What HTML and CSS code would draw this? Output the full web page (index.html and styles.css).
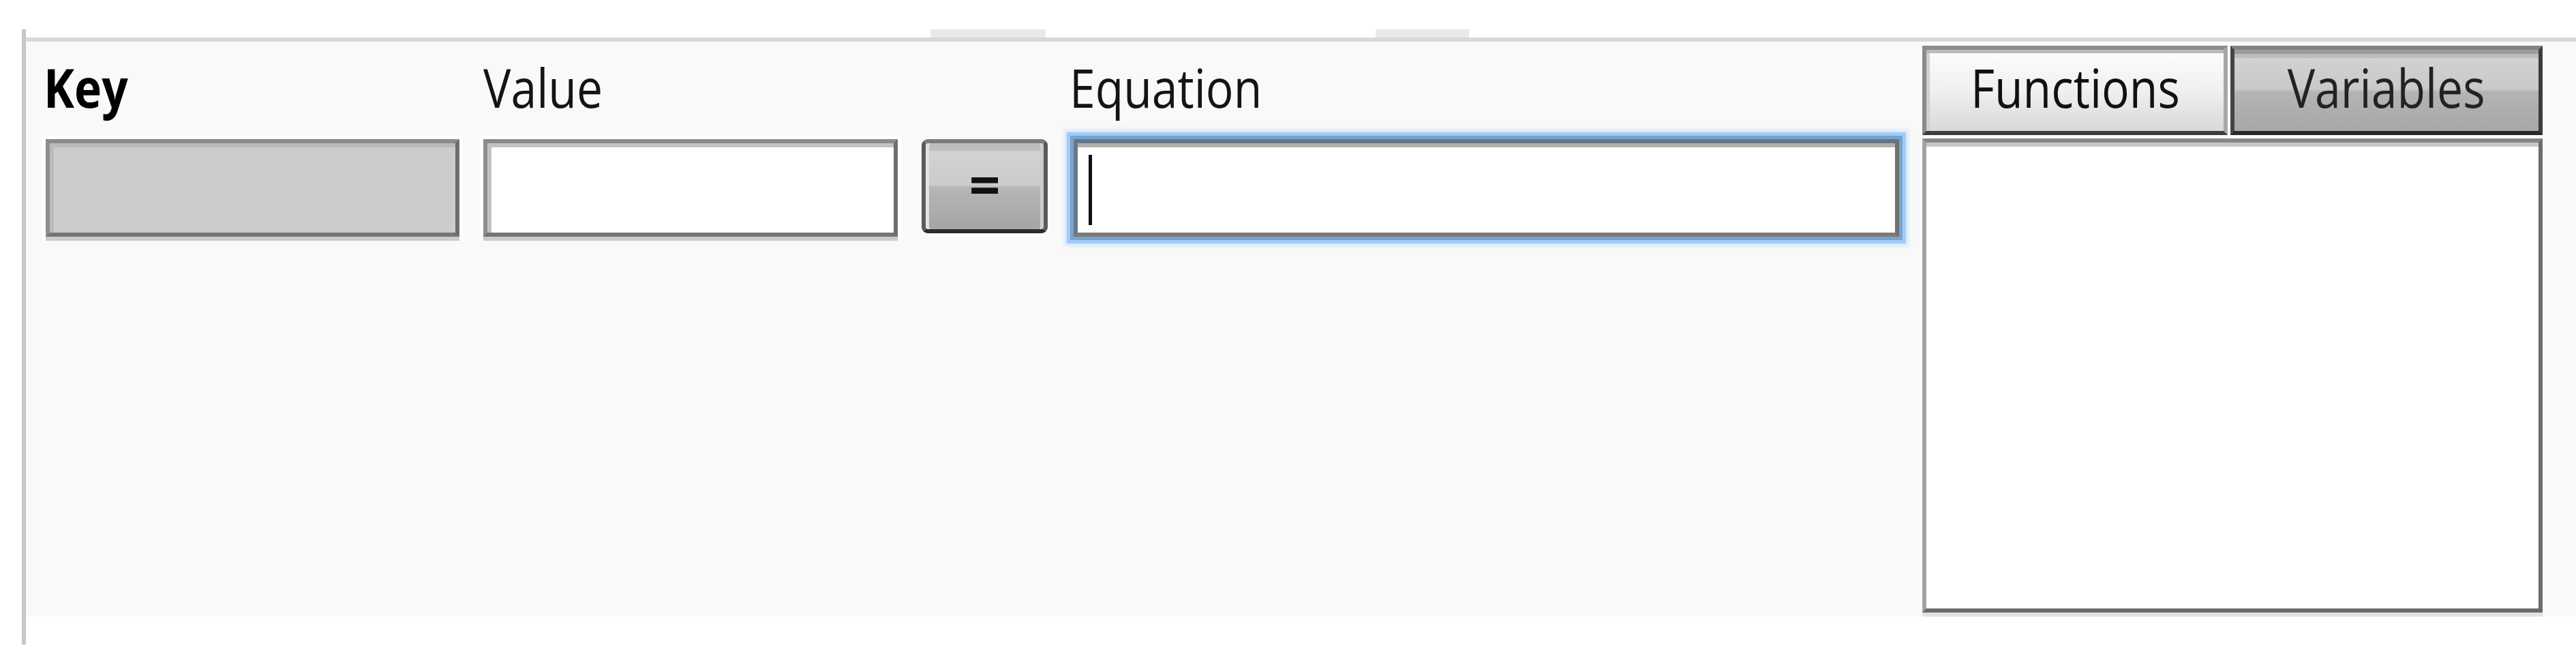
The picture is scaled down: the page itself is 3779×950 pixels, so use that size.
FILE: index.html
```html
<!DOCTYPE html>
<html>
<head>
<meta charset="utf-8">
<title>Equation editor</title>
<link rel="stylesheet" href="styles.css">
</head>
<body>
<div class="window">
  <div class="tabstrip"><span class="ghost-tab ghost-1"></span><span class="ghost-tab ghost-2"></span></div>
  <div class="rule"></div>
  <div class="panel">
    <div class="form">
      <div class="label key-label"><span class="txt">Key</span></div>
      <div class="label"><span class="txt">Value</span></div>
      <div class="label"></div>
      <div class="label eq-label"><span class="txt">Equation</span></div>
      <div class="field field-key"></div>
      <div class="field field-value"></div>
      <div class="eq-btn"><span class="eq-sign">=</span></div>
      <div class="field field-eq"><span class="caret"></span></div>
    </div>
    <div class="side">
      <div class="tabs">
        <div class="tab tab-fn"><span class="txt">Functions</span></div>
        <div class="tab tab-var"><span class="txt">Variables</span></div>
      </div>
      <div class="listbox"></div>
    </div>
  </div>
</div>
</body>
</html>
```
FILE: styles.css
```css
body {
  margin: 0;
  background: #ffffff;
  font-family: "Open Sans", "Noto Sans", sans-serif;
  color: #111111;
}

.window {
  margin: 43px 0 0 32px;
  border-left: 6px solid #c6c6c6;
  height: 902px;
}

.tabstrip {
  height: 12px;
  display: flex;
}

.ghost-tab {
  height: 12px;
  background: #e9e9e9;
}

.ghost-1 {
  margin-left: 1327px;
  width: 169px;
}

.ghost-2 {
  margin-left: 484px;
  width: 137px;
}

.rule {
  height: 6px;
  background: #d8d8d8;
}

.panel {
  height: 843px;
  background: #f9f9f9;
  display: flex;
  padding-left: 29px;
}

.form {
  display: grid;
  grid-template-columns: 607px 608px 185px 1214px;
  grid-template-rows: 78px 143px;
  column-gap: 35px;
  row-gap: 37px;
  padding-top: 28px;
  align-items: start;
}

.txt {
  display: inline-block;
  font-size: 78px;
  line-height: 78px;
  transform: scaleX(0.87);
  transform-origin: 0 50%;
  white-space: nowrap;
}

.label {
  height: 78px;
  color: #141414;
}

.key-label {
  font-weight: 700;
  color: #000;
  margin-left: -3px;
}

.eq-label {
  margin-left: -3px;
}

.field {
  box-sizing: border-box;
  height: 143px;
  border: 6px solid;
  border-color: #8a8a8a #6e6e6e #747474 #8e8e8e;
  box-shadow: inset 6px 6px 0 #bababa, 0 6px 0 #cbcbcb, 0 0 0 5px #ffffff;
}

.field-key {
  background: #cbcccd;
}

.field-value {
  background: #ffffff;
  box-shadow: inset 6px 6px 0 #c2c2c2, 0 6px 0 #cbcbcb, 0 0 0 5px #ffffff;
}

.field-eq {
  margin-left: 3px;
  background: #ffffff;
  border-color: #687482 #707070 #7e7976 #6a7886;
  box-shadow: inset 0 6px 0 #b0b0aa, 0 0 0 5px #76a4d0, 0 0 0 10px #9fcdf7, 0 0 6px 13px rgba(170, 212, 250, 0.55);
}

.caret {
  display: block;
  margin: 17px 0 0 16px;
  width: 5px;
  height: 103px;
  background: #111111;
}

.eq-btn {
  box-sizing: border-box;
  height: 138px;
  border: 6px solid #5a5a5a;
  border-top-color: #7b7b7b;
  border-bottom-color: #2b2b2b;
  border-radius: 9px;
  background: linear-gradient(#bdbdbd 0px, #bdbdbd 10px, #d3d3d3 12px, #cbcbcb 49%, #b6b6b6 51%, #a5a5a5 100%);
  box-shadow: inset 5px 0 0 #e2e2e2, inset -5px 0 0 #cdcdcd;
  display: flex;
  align-items: center;
  justify-content: center;
  padding-bottom: 6px;
}

.eq-sign {
  font-size: 80px;
  line-height: 80px;
  font-weight: 700;
  color: #111;
}

.side {
  margin-left: 34px;
  width: 910px;
  padding-top: 6px;
  display: flex;
  flex-direction: column;
}

.tabs {
  display: flex;
  height: 131px;
  gap: 4px;
}

.tab {
  box-sizing: border-box;
  height: 131px;
  border: 6px solid;
  display: flex;
  align-items: center;
  justify-content: center;
  padding-bottom: 10px;
  color: #111;
}

.tab .txt {
  transform-origin: 50% 50%;
}

.tab-fn {
  width: 448px;
  border-color: #8c8c8c #a8a8a8 #3c3c3c #8a8a8a;
  background: linear-gradient(#fdfdfd, #f0f0f0 50%, #d8d8d8);
  box-shadow: inset 0 5px 0 #bababa, inset 5px 0 0 #d0d0d0;
}

.tab-var {
  flex: 1;
  border-color: #828282 #3c3c3c #2a2a2a #444444;
  background: linear-gradient(#d4d4d4, #c9c9c9 48%, #b4b4b4 52%, #a7a7a7);
  box-shadow: inset 0 6px 0 #9c9c9c, inset 0 12px 0 #bcbcbc;
  color: #222;
}

.listbox {
  box-sizing: border-box;
  margin-top: 5px;
  height: 695px;
  background: #ffffff;
  border: 6px solid;
  border-color: #868686 #6b6b6b #6b6b6b #a2a2a2;
  box-shadow: inset 0 6px 0 #c6c6c6, 0 6px 0 #e2e2e2;
}
```
